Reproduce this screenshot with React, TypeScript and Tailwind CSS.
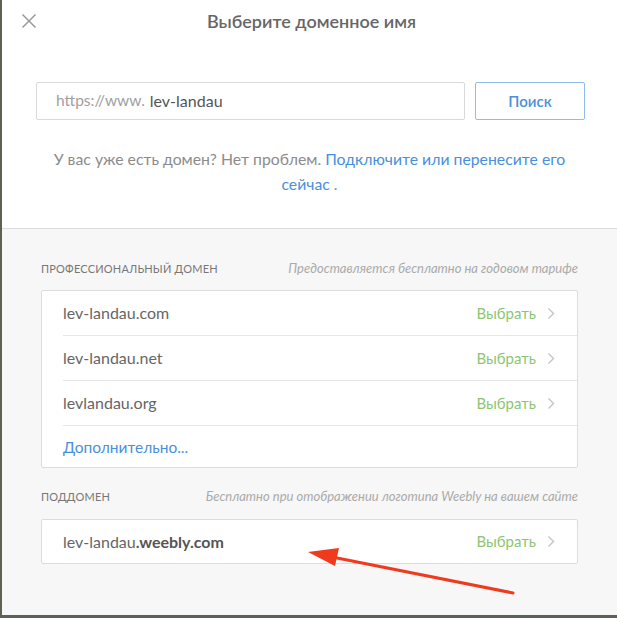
import React from "react";

const font = { fontFamily: "Lato, 'Open Sans', sans-serif" };

function Chevron() {
  return (
    <svg width="8" height="13" viewBox="0 0 8 13" className="ml-[11px]">
      <path d="M1.5 1.5 L6.5 6.5 L1.5 11.5" fill="none" stroke="#c4c4c4" strokeWidth="1.4" />
    </svg>
  );
}

function Row({ name, last, h }: { name: React.ReactNode; last?: boolean; h: string }) {
  return (
    <div className="pl-[21px]">
      <div className={`flex ${h} items-center pr-[22px] ${last ? "" : "border-b border-[#e6e6e6]"}`}>
        <span className="flex-1 text-[16px] text-[#666]">{name}</span>
        <span className="text-[15px] text-[#8cc672]">Выбрать</span>
        <Chevron />
      </div>
    </div>
  );
}

export default function App() {
  return (
    <div className="w-[617px] h-[618px] bg-[#5d6353] pl-[2px] pb-[3px]" style={font}>
      <div className="relative h-[615px] bg-white flex flex-col">
        <div className="h-[229px] flex flex-col border-b border-[#dcdcdc]">
          <div className="relative flex h-[42px] items-center justify-center">
            <svg width="16" height="16" viewBox="0 0 16 16" className="absolute left-[19px] top-[13px]">
              <path d="M1.5 1.5 L14.5 14.5 M14.5 1.5 L1.5 14.5" stroke="#9a9a9a" strokeWidth="1.5" />
            </svg>
            <span className="text-[18px] font-semibold text-[#666] ml-[4px]">Выберите доменное имя</span>
          </div>
          <div className="flex mt-[40px] ml-[34px] gap-[10px]">
            <div className="w-[429px] h-[38px] border border-[#d9d9d9] rounded-[2px] flex items-center pl-[19px]">
              <span className="text-[15.5px] text-[#a0a0a0]">https://www.</span>
              <span className="text-[16px] text-[#555] ml-[5px]">lev-landau</span>
            </div>
            <div className="w-[110px] h-[38px] border border-[#8fbcec] rounded-[2px] flex items-center justify-center text-[15px] font-semibold text-[#4a8fdb]">
              Поиск
            </div>
          </div>
          <div className="mt-[26px] px-[30px] text-center text-[15.8px] leading-[25px] text-[#8c8c8c]">
            У вас уже есть домен? Нет проблем. <span className="text-[#4a8fdb]">Подключите или перенесите его</span>
            <br />
            <span className="text-[#4a8fdb]">сейчас</span> .
          </div>
        </div>
        <div className="flex-1 bg-[#f7f7f7] px-[39px]">
          <div className="flex justify-between items-center mt-[33px] h-[14px]">
            <span className="text-[11px] text-[#777] uppercase tracking-[0.2px]">Профессиональный домен</span>
            <span className="text-[13px] italic text-[#aaa]">Предоставляется бесплатно на годовом тарифе</span>
          </div>
          <div className="mt-[14px] bg-white border border-[#dcdcdc] rounded-[2px]">
            <Row name="lev-landau.com" h="h-[45px]" />
            <Row name="lev-landau.net" h="h-[45px]" />
            <Row name="levlandau.org" h="h-[45px]" />
            <div className="pl-[21px] h-[41px] pt-[3px] flex items-center text-[15.5px] text-[#4a8fdb]">Дополнительно...</div>
          </div>
          <div className="flex justify-between items-center mt-[22px] h-[14px]">
            <span className="text-[11px] text-[#777] uppercase tracking-[0.2px]">Поддомен</span>
            <span className="text-[13px] italic text-[#aaa]">Бесплатно при отображении логотипа Weebly на вашем сайте</span>
          </div>
          <div className="mt-[15px] bg-white border border-[#dcdcdc] rounded-[2px]">
            <Row
              name={
                <>
                  lev-landau<span className="font-bold text-[#555]">.weebly.com</span>
                </>
              }
              h="h-[43px]"
              last
            />
          </div>
        </div>
        <svg className="absolute left-0 top-0 pointer-events-none" width="615" height="615">
          <line x1="511" y1="593" x2="330" y2="557" stroke="#f03a1e" strokeWidth="3" strokeLinecap="round" />
          <polygon points="306,552 337,548 333,566" fill="#f03a1e" />
        </svg>
      </div>
    </div>
  );
}
